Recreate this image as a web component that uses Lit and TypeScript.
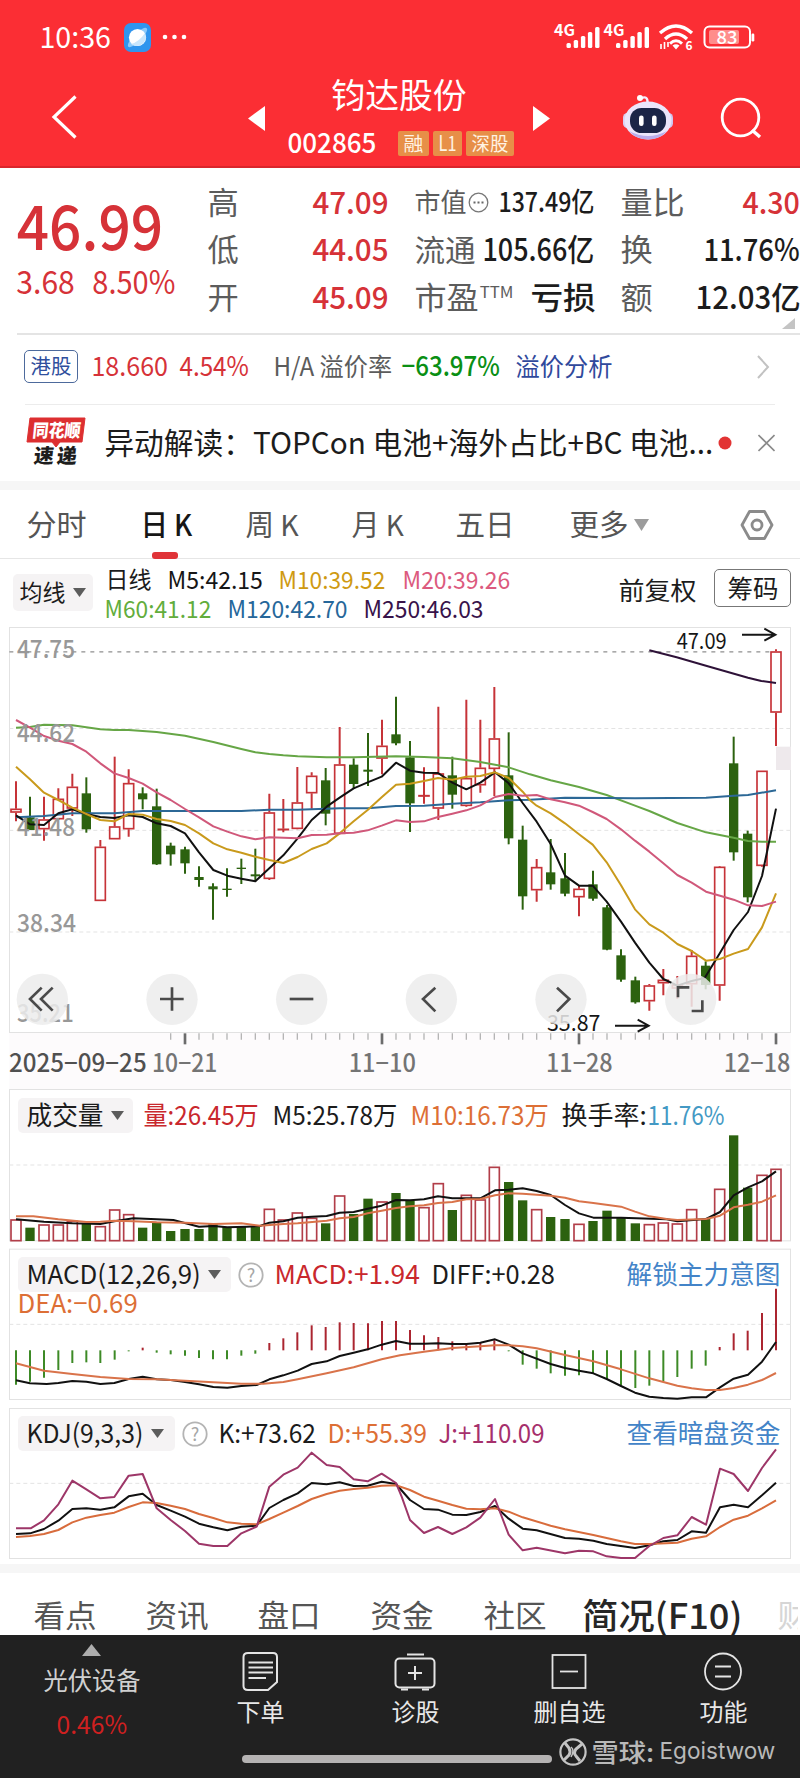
import { LitElement, html, svg, css } from "lit";
import { customElement, property, query } from "lit/decorators.js";

/** One line of text, condensed or widened so that it fills exactly `w` pixels. */
@customElement("fit-text")
class FitText extends LitElement {
  @property({ type: Number }) w = 0;
  @property({ type: Number }) gap = 0;
  @property({ type: Number }) size = 26;
  @query("span") private line!: HTMLSpanElement;

  static styles = css`
    :host {
      display: block;
      flex: none;
      line-height: 1;
      white-space: nowrap;
    }
    span {
      display: inline-block;
      vertical-align: top;
      transform-origin: 0 0;
    }
  `;

  updated() {
    this.style.width = `${this.w}px`;
    this.style.height = `${this.size}px`;
    this.style.marginLeft = `${this.gap}px`;
    this.style.fontSize = `${this.size}px`;
    const natural = this.line.offsetWidth || this.w;
    this.line.style.transform = `translate(-0.02em, -0.06em) scaleX(${(this.w + this.size * 0.04) / natural})`;
  }

  render() {
    return html`<span><slot></slot></span>`;
  }
}

/* Chart geometry is kept in thirds of a pixel. */
const X0 = 48;
const STEP = 42.22;
const cx = (i: number) => Math.round(X0 + i * STEP);

type Candle = [string, number, number, number, number];
const candles: Candle[] = [
  ["u", 484, 566, 578, 604], ["d", 530, 592, 630, 630], ["u", 530, 598, 628, 662], ["u", 505, 536, 598, 600],
  ["u", 461, 500, 566, 588], ["d", 472, 520, 628, 638], ["u", 660, 680, 843, 843], ["u", 410, 619, 658, 658],
  ["u", 448, 489, 628, 650], ["d", 502, 520, 538, 568], ["d", 506, 559, 733, 735], ["d", 668, 677, 703, 737],
  ["d", 680, 688, 730, 761], ["d", 739, 771, 780, 800], ["d", 790, 799, 808, 899], ["d", 745, 806, 810, 830],
  ["d", 716, 743, 747, 792], ["d", 686, 763, 769, 784], ["u", 521, 577, 777, 780], ["u", 537, 626, 628, 637],
  ["u", 441, 547, 627, 628], ["u", 457, 467, 520, 566], ["d", 444, 481, 581, 616], ["u", 321, 433, 642, 643],
  ["d", 415, 434, 492, 504], ["d", 339, 449, 455, 498], ["u", 299, 377, 416, 463], ["d", 230, 343, 370, 376],
  ["d", 363, 412, 550, 636], ["u", 442, 525, 527, 551], ["u", 260, 460, 566, 600], ["d", 410, 466, 524, 566],
  ["u", 239, 474, 558, 560], ["u", 299, 443, 496, 518], ["u", 201, 355, 447, 528], ["d", 337, 466, 655, 673],
  ["d", 617, 659, 829, 869], ["u", 717, 741, 811, 845], ["d", 657, 757, 793, 809], ["d", 699, 775, 821, 829],
  ["u", 796, 806, 832, 889], ["d", 752, 793, 836, 842], ["d", 855, 862, 989, 991], ["d", 988, 1006, 1079, 1085],
  ["d", 1070, 1081, 1147, 1151], ["u", 1092, 1096, 1144, 1172], ["u", 1047, 1079, 1090, 1126],
  ["u", 1068, 1094, 1106, 1136], ["u", 990, 1007, 1093, 1160], ["d", 1024, 1037, 1095, 1108],
  ["u", 738, 740, 1097, 1142], ["d", 350, 430, 697, 722], ["d", 632, 641, 832, 847], ["u", 452, 452, 738, 740],
  ["u", 88, 94, 278, 378],
];

const volumes = [
  418, 443, 433, 433, 422, 430, 438, 388, 402, 443, 428, 453, 447, 447, 432, 441, 440, 441, 386, 418, 397, 413, 430,
  346, 402, 356, 364, 339, 362, 381, 309, 390, 344, 358, 260, 306, 361, 387, 411, 417, 431, 423, 392, 413, 430, 432,
  427, 430, 387, 417, 326, 166, 323, 284, 266,
];

const macdEnds = [
  914, 905, 893, 870, 849, 847, 849, 839, 814, 803, 818, 823, 827, 834, 838, 838, 827, 821, 789, 775, 757, 736, 741,
  727, 729, 730, 723, 723, 750, 766, 771, 784, 790, 787, 781, 814, 854, 866, 880, 887, 886, 880, 897, 915, 924, 917,
  904, 891, 866, 857, 801, 760, 752, 699, 626,
];

const priceLines = [
  { c: "m250", p: "1948,91 2030,112 2118,137 2244,173 2284,183 2328,189" },
  { c: "m60", p: "48,323 90,321 132,314 217,316 259,322 301,328 343,330 386,330 470,336 555,347 640,366 724,387 766,397 808,402 850,406 893,409 980,412 1061,412 1188,409 1272,411 1357,415 1441,426 1526,442 1590,463 1652,481 1737,501 1820,525 1905,557 1948,573 2032,609 2118,637 2201,653 2244,663 2286,665 2328,665" },
  { c: "m120", p: "48,592 132,588 217,580 343,580 428,573 555,573 724,573 808,569 893,569 1019,565 1103,565 1188,558 1272,557 1357,551 1441,547 1526,541 1590,539 1695,533 1820,534 1905,535 2118,533 2201,527 2244,525 2328,511" },
  { c: "m5", p: "48,586 90,613 132,615 175,580 217,568 259,582 301,591 343,594 386,586 428,591 470,610 512,618 555,640 597,697 640,750 682,767 724,776 766,784 808,745 850,706 893,655 935,600 980,560 1019,533 1061,505 1103,487 1145,470 1188,428 1230,452 1272,458 1314,459 1357,488 1399,508 1441,488 1485,457 1526,490 1568,549 1610,605 1652,672 1695,767 1737,797 1778,797 1820,845 1863,905 1905,968 1948,1028 1990,1077 2032,1097 2075,1083 2114,1074 2158,1002 2201,930 2244,876 2286,768 2328,566" },
  { c: "m10", p: "48,440 90,478 132,518 175,540 217,563 259,582 301,600 343,604 386,582 428,584 470,597 512,603 555,615 597,640 640,670 682,688 724,698 766,710 808,720 850,729 893,711 935,687 980,670 1019,640 1061,604 1103,570 1145,532 1188,494 1230,491 1272,483 1314,474 1357,479 1399,470 1441,468 1485,457 1526,474 1568,515 1590,541 1610,557 1652,580 1695,610 1737,643 1778,674 1820,727 1863,796 1905,868 1948,913 1990,938 2032,972 2075,993 2118,1022 2160,1017 2201,1001 2244,987 2286,922 2328,820" },
  { c: "m20", p: "48,300 90,323 132,348 175,362 217,372 259,395 301,430 343,460 386,474 428,491 470,517 512,540 555,567 597,592 640,619 682,635 724,649 766,658 808,652 893,655 935,645 980,644 1019,640 1061,638 1103,631 1145,617 1188,601 1230,606 1272,604 1314,591 1357,581 1399,571 1441,556 1485,531 1526,522 1568,527 1610,525 1652,538 1695,547 1737,557 1778,576 1820,597 1863,628 1905,662 1948,695 1990,730 2032,765 2075,788 2118,815 2160,827 2201,839 2244,856 2286,858 2328,845" },
];

const volumeLines = [
  { c: "m5", p: "48,418 132,425 217,430 301,432 343,424 400,415 470,418 520,420 597,440 640,438 682,442 740,440 780,438 808,428 850,424 893,413 935,410 980,408 1019,398 1061,396 1103,386 1145,377 1188,360 1230,361 1272,358 1314,349 1357,355 1441,355 1485,331 1526,329 1568,325 1610,333 1652,345 1695,375 1737,400 1780,413 1863,413 2000,418 2032,424 2118,417 2160,396 2201,346 2244,322 2286,304 2328,274" },
  { c: "ora", p: "48,409 100,409 175,418 259,426 301,425 343,422 400,424 470,427 555,428 640,432 724,430 780,437 850,432 893,430 980,422 1019,415 1061,411 1103,400 1145,392 1188,384 1230,379 1272,376 1314,369 1357,366 1399,358 1441,357 1485,346 1526,340 1568,341 1652,347 1695,353 1737,364 1780,369 1863,380 1905,395 1948,409 2000,417 2032,420 2118,417 2160,407 2201,382 2244,374 2286,365 2328,346" },
];

const macdLines = [
  { c: "m5", p: "48,901 90,910 140,912 175,909 217,903 259,905 301,912 343,909 386,897 428,890 470,898 512,900 555,906 597,913 640,921 682,923 724,918 770,915 808,898 850,886 893,872 935,852 980,844 1019,828 1061,818 1103,808 1145,794 1188,783 1230,791 1272,791 1314,790 1357,792 1399,792 1441,788 1485,778 1526,794 1568,820 1652,852 1695,864 1737,872 1780,880 1820,897 1863,918 1905,938 1948,950 1990,954 2032,956 2075,952 2118,952 2160,922 2201,896 2244,884 2286,845 2328,786" },
  { c: "ora", p: "48,850 132,872 217,882 301,891 386,897 470,898 555,902 640,907 724,911 790,911 850,906 893,898 980,880 1061,862 1145,838 1200,826 1272,815 1357,804 1441,799 1485,796 1526,796 1568,799 1610,805 1695,825 1780,844 1863,868 1948,895 2032,917 2075,925 2118,930 2160,930 2201,924 2244,914 2286,900 2328,879" },
];

const kdjLines = [
  { c: "m5", p: "48,402 90,400 132,387 175,362 217,327 259,325 301,329 343,322 386,289 428,281 470,315 512,332 555,350 597,371 640,382 682,391 724,380 770,377 808,324 850,300 893,280 935,249 980,253 1019,247 1061,258 1103,257 1145,245 1188,252 1230,300 1272,327 1314,329 1357,344 1399,345 1441,336 1485,318 1526,356 1568,386 1610,391 1695,414 1737,416 1780,422 1820,432 1905,444 1948,436 1990,424 2032,420 2075,394 2118,398 2160,322 2201,314 2244,322 2286,286 2328,248" },
  { c: "kd", p: "48,411 90,408 132,402 175,390 217,367 259,353 301,345 343,338 386,321 428,307 470,309 512,317 555,327 597,342 640,354 682,367 724,371 770,373 808,357 850,338 893,318 935,297 980,282 1019,272 1061,267 1103,263 1145,257 1190,256 1230,270 1272,290 1314,302 1357,315 1399,326 1441,328 1485,325 1526,335 1568,352 1652,377 1695,388 1780,405 1863,424 1905,432 1948,432 2032,428 2075,416 2118,409 2160,381 2201,359 2244,347 2286,325 2328,301" },
  { c: "kj", p: "48,385 92,385 132,361 175,313 217,242 259,268 301,295 343,291 386,227 428,222 470,325 512,360 555,393 597,431 640,438 682,438 724,400 770,380 808,260 850,224 893,203 935,158 980,195 1019,201 1061,238 1103,244 1145,221 1188,249 1205,290 1230,360 1272,399 1314,381 1357,402 1399,382 1441,353 1485,297 1526,404 1568,451 1610,443 1695,460 1737,452 1780,454 1820,469 1863,474 1905,474 1948,438 1990,414 2032,406 2075,351 2118,374 2160,206 2201,222 2244,273 2286,204 2328,148" },
];

const lines = (set: { c: string; p: string }[]) =>
  set.map((l) => svg`<polyline class="ln ${l.c}" points=${l.p} />`);

const ctext = (x: number, y: number, w: number, text: string, cls: string) =>
  svg`<text class=${cls} x=${x} y=${y} textLength=${w} lengthAdjust="spacingAndGlyphs">${text}</text>`;

const candle = ([kind, high, top, bottom, low]: Candle, i: number) => {
  const x = cx(i);
  const h = Math.max(bottom - top, 4);
  return kind === "u"
    ? svg`<path class="wick up" d="M${x} ${high}V${top}M${x} ${bottom}V${low}" />
        <rect class="up" x=${x - 15} y=${top + 2} width="30" height=${Math.max(h - 4, 1)} />`
    : svg`<path class="wick down" d="M${x} ${high}V${low}" /><rect class="down" x=${x - 14} y=${top} width="28" height=${h} />`;
};

const roundGlyphs = [
  "M125 1103L90 1137L125 1172M158 1103L123 1137L158 1172",
  "M480 1137H551M516 1102V1172",
  "M869 1137H940",
  "M1306 1103L1269 1137L1306 1174",
  "M1671 1103L1708 1137L1671 1174",
  "M2034 1132V1102H2068M2107 1141V1173H2075",
];

@customElement("app-root")
class AppRoot extends LitElement {
  static styles = css`
    :host {
      display: block;
      width: 800px;
      height: 1778px;
      overflow: hidden;
      background: #fff;
      color: #1c1c1c;
      font-family: "Noto Sans CJK SC", sans-serif;
    }
    * { box-sizing: border-box; }
    svg { display: block; flex: none; }
    .row { display: flex; align-items: center; }
    .red { color: #d63238; }
    .white { color: #fff; }
    .b { font-weight: 500; }
    .gray { color: #5c5c5c; }

    header { height: 168px; background: #fb2e34; border-bottom: 2px solid #d9262c; }
    .status { height: 74px; color: #fff; }
    .app-icon { margin-left: 14px; }
    .dots { margin-left: 11px; }
    .signals { margin-left: 366px; overflow: visible; }
    .nav { height: 90px; align-items: flex-start; }
    .nav-back { margin: 20px 0 0 50px; }
    .nav-prev { margin: 32px 0 0 170px; }
    .nav-title { width: 236px; margin: 5px 0 0 23px; }
    .nav-code { height: 26px; margin-top: 17px; }
    .nav-next { margin: 32px 0 0 9px; }
    .bot { margin: 20px 0 0 72px; }
    .search { margin: 23px 0 0 45px; }
    .tag { display: flex; align-items: center; height: 25px; padding: 0 6px; margin-left: 4px; border-radius: 2px; background: #e78f48; color: #fff3e4; }
    .tag.first { margin-left: 22px; }

    .quote { display: flex; height: 165px; padding-top: 11px; }
    .price { width: 192px; padding-left: 17px; }
    .price .big { height: 86px; padding-top: 17px; }
    .price .chg { height: 34px; }
    .cols .row { height: 47px; }
    .cols .row:last-child { height: 49px; }
    .dots-ico { margin-left: 2px; }
    .sup { align-self: flex-start; margin-top: 11px; }
    .corner { margin: -18px 0 0 782px; height: 18px; padding-top: 3px; }

    .hk { height: 71px; margin: 0 0 0 17px; border-top: 2px solid #e4e4e4; padding-bottom: 6px; }
    .hk-tag { display: flex; align-items: center; justify-content: center; margin-left: 7px; width: 54px; height: 33px; border: 1px solid #4d6a9c; border-radius: 5px; color: #2f4f9d; }
    .blue { color: #30499c; }
    .green { color: #0a8f14; }
    .chev { margin-left: 144px; }
    .news { height: 77px; margin-left: 25px; width: 750px; border-top: 1px solid #ececec; }
    .logo { margin-left: 1px; }
    .dot { margin-left: 5px; }
    .x { margin-left: 26px; }
    .band { height: 9px; background: #f6f6f6; }

    .periods { height: 69px; border-bottom: 1px solid #e6e6e6; position: relative; padding: 2px 0 0 27px; color: #555; }
    .underline { position: absolute; left: 152px; top: 62px; width: 26px; height: 7px; border-radius: 3px; background: #e03338; }
    .ink { color: #161616; }
    .more { margin-left: 6px; }
    .gear { margin-left: 91px; }

    .ma { height: 68px; align-items: flex-start; }
    .picker { display: flex; align-items: center; border-radius: 5px; background: #f5f3f4; }
    .picker.avg { width: 80px; height: 37px; margin: 15px 0 0 13px; padding-left: 7px; }
    .picker.avg svg { margin-left: 8px; }
    .ma-values { width: 512px; padding-top: 6px; }
    .ma-values .row { height: 29px; padding-left: 12px; }
    .adj { width: 91px; padding: 19px 0 0 14px; }
    .chips { display: flex; align-items: center; width: 77px; height: 38px; margin: 10px 0 0 18px; padding-left: 13px; border: 1px solid #777; border-radius: 5px; }
    .t5 { color: #161616; } .t10 { color: #cf9a12; } .t20 { color: #dc5a7e; } .t60 { color: #62ad3c; }
    .t120 { color: #26679a; } .t250 { color: #38124a; } .tora { color: #dd6f36; } .tj { color: #a6306c; }
    .cyan { color: #4399c4; } .link { color: #4384c8; } .vred { color: #c9282d; }

    .panel { display: grid; }
    .panel > * { grid-area: 1 / 1; }
    .head { padding-left: 18px; z-index: 1; }
    .head .picker { height: 35px; padding-left: 9px; }
    .picker svg { margin-left: 8px; }
    .picker.vol { width: 115px; }
    .picker.macd { width: 213px; }
    .picker.kdj { width: 157px; }
    .head.volh { padding-top: 9px; }
    .head.macdh { padding-top: 12px; }
    .head.kdjh { padding-top: 12px; }
    .sub { height: 24px; }
    .help { margin-left: 7px; }

    .frame { fill: none; stroke: #e2e2e2; stroke-width: 3; }
    .grid { stroke: #e3e3e3; stroke-width: 3; stroke-dasharray: 12 9; fill: none; }
    .grid.top { stroke: #8f8f8f; stroke-width: 4; stroke-dasharray: 12 15; }
    .axis-bg { fill: #fdfbfc; }
    .side { fill: #eee9ec; }
    .up { fill: #fff; stroke: #c63338; stroke-width: 5; }
    .down { fill: #2c620f; }
    .wick { fill: none; stroke-width: 6; }
    .wick.up { stroke-width: 6; }
    .wick.down { stroke: #2c620f; }
    .vup { fill: #fff; stroke: #b23e49; stroke-width: 5; }
    .ln { fill: none; stroke-width: 6; stroke-linejoin: round; }
    .m5 { stroke: #111; } .m10 { stroke: #c99a1c; } .m20 { stroke: #d0587a; } .m60 { stroke: #66a646; }
    .m120 { stroke: #2c6896; } .m250 { stroke: #2e1238; } .ora { stroke: #d9734a; } .kd { stroke: #d86c3c; } .kj { stroke: #9d3668; }
    .mr { stroke: #ab2530; stroke-width: 6; } .mg { stroke: #3d8a26; stroke-width: 6; }
    .pl { font-size: 75px; font-weight: 500; fill: #989898; }
    .dl { font-size: 75px; font-weight: 500; fill: #747474; }
    .dl.first { fill: #505050; }
    .ex { font-size: 66px; fill: #161616; }
    .tick { stroke: #b5b5b5; stroke-width: 4; }
    .tick.major { stroke: #6c6c6c; stroke-width: 8; }
    .arrow { fill: none; stroke: #161616; stroke-width: 6; }
    .round { fill: #ececec; fill-opacity: 0.85; }
    .glyph { fill: none; stroke: #4a4a4a; stroke-width: 8; }

    .tabs { height: 62px; padding: 27px 0 0 34px; align-items: flex-start; color: #555; overflow: hidden; }
    .strong { margin-top: -2px; color: #262626; }
    .faint { color: #d6d6d6; width: 56px; flex: none; overflow: hidden; }

    footer { height: 144px; background: #212121; color: #e8e8e8; }
    .actions { height: 102px; align-items: flex-start; }
    .act { display: flex; flex-direction: column; align-items: center; padding-top: 16px; }
    .act.sector { width: 183px; padding-top: 9px; }
    .sector .name { margin-top: 12px; color: #d0d0d0; }
    .sector .pct { margin-top: 19px; color: #cf2020; }
    .cap { margin-top: 8px; }
    .order { width: 155px; }
    .diag, .del, .fn { width: 154px; }
    .bottom { height: 30px; padding-left: 242px; }
    .home { width: 310px; height: 8px; border-radius: 4px; background: #b5b3b3; margin-top: 14px; }
    .mark { color: #b9b9b9; }
    .latin { font-family: Inter, "Open Sans", sans-serif; }
    .wm { margin-left: 7px; }
  `;

  private header() {
    return html`<header>
      <div class="status row">
        <fit-text w="70" gap="40" size="29">10:36</fit-text>
        <svg class="app-icon" width="27" height="29" viewBox="0 0 27 29">
          <rect width="27" height="29" rx="7" fill="#2f95ee" />
          <ellipse cx="13.5" cy="14.5" rx="13" ry="4" transform="rotate(-45 13.5 14.5)" fill="#8ccafa" />
          <circle cx="13.5" cy="14.5" r="8.6" fill="#fff" />
          <path d="M7 21Q15 19 21 10L22 15Q19 24 11 23Z" fill="#c9e6fc" />
        </svg>
        <svg class="dots" width="26" height="8" viewBox="0 0 26 8" fill="#fff">
          <circle cx="3" cy="4" r="2.3" /><circle cx="12.5" cy="4" r="2.3" /><circle cx="22" cy="4" r="2.3" />
        </svg>
        <svg class="signals" width="202" height="28" viewBox="553 23 202 28">
          ${[0, 49.5].map(
            (d) => svg`<g transform="translate(${d} 0)" fill="#fff">
              <text x="553" y="36" font-size="16" font-weight="700" textLength="21" lengthAdjust="spacingAndGlyphs">4G</text>
              <rect x="565.5" y="43" width="4.4" height="5" rx="1.5" /><rect x="572.7" y="40" width="4.4" height="8" rx="1.5" />
              <rect x="579.9" y="36" width="4.4" height="12" rx="1.5" /><rect x="586.9" y="32" width="4.4" height="16" rx="1.5" />
              <rect x="594.1" y="27" width="4.4" height="21" rx="1.5" /></g>`
          )}
          <g fill="none" stroke="#fff" stroke-width="3.4">
            <path d="M659 33Q675 19 691 33" /><path d="M664 39Q675 29 686 39" /><path d="M669 43.6Q675 38 681 43.6" stroke-width="3" />
            <path d="M660 44V49M663.5 42V49M667 42V47" stroke-width="1.6" />
          </g>
          <path d="M671.5 45.5Q675 43 678.5 45.5L675 49.5Z" fill="#fff" />
          <text x="684.5" y="50" font-size="12" font-weight="700" fill="#fff">6</text>
          <rect x="703.5" y="26.5" width="45.5" height="21" rx="5" fill="none" stroke="#fff" stroke-width="2" />
          <rect x="708" y="30" width="30" height="14" rx="2" fill="#ff8d8b" />
          <rect x="750.5" y="33.5" width="2.8" height="8" rx="1.2" fill="#fff" />
          <text x="715.5" y="43.5" font-size="18" font-weight="500" fill="#fff" textLength="21" lengthAdjust="spacingAndGlyphs">83</text>
        </svg>
      </div>
      <div class="nav row">
        <svg class="nav-back" width="28" height="46" viewBox="0 0 28 46"><path d="M25.5 2.5L4 23L25.5 43.5" fill="none" stroke="#fff" stroke-width="3.2" /></svg>
        <svg class="nav-prev" width="17" height="25" viewBox="0 0 17 25"><path d="M17 0V25L0 12.5Z" fill="#fff" /></svg>
        <div class="nav-title">
          <fit-text class="white" w="134" gap="44" size="34">钧达股份</fit-text>
          <div class="nav-code row">
            <fit-text class="white b" w="88" size="28">002865</fit-text>
            <span class="tag first"><fit-text w="19" size="19">融</fit-text></span>
            <span class="tag"><fit-text w="17" size="21">L1</fit-text></span>
            <span class="tag"><fit-text w="36" size="19">深股</fit-text></span>
          </div>
        </div>
        <svg class="nav-next" width="17" height="25" viewBox="0 0 17 25"><path d="M0 0V25L17 12.5Z" fill="#fff" /></svg>
        <svg class="bot" width="52" height="48" viewBox="0 0 52 48">
          <path d="M19 4.5Q26 1 25.5 9" fill="none" stroke="#f4eeff" stroke-width="2.4" /><circle cx="18" cy="4" r="3" fill="#fff" />
          <rect x="1" y="19" width="10" height="15" rx="4.5" fill="#d9d0f4" /><rect x="41" y="19" width="10" height="15" rx="4.5" fill="#cfc5f0" />
          <ellipse cx="26" cy="26.5" rx="23.5" ry="19" fill="#ebe5fb" /><path d="M7 37Q26 47 45 37Q38 45.5 26 45.5Q14 45.5 7 37Z" fill="#b9adeb" />
          <rect x="8" y="14" width="36" height="25" rx="11.5" fill="#1b2547" /><rect x="17" y="21.5" width="4.6" height="10.5" rx="2.2" fill="#fff" /><rect x="30" y="21.5" width="4.6" height="10.5" rx="2.2" fill="#fff" />
        </svg>
        <svg class="search" width="44" height="44" viewBox="0 0 44 44" fill="none" stroke="#fff" stroke-width="2.8"><circle cx="21.5" cy="20.5" r="18.3" /><path d="M33 33L41 40" stroke-width="3.4" /></svg>
      </div>
    </header>`;
  }

  private quote() {
    return html`<section class="quote">
        <div class="price">
          <div class="big"><fit-text class="red b" w="144" gap="1" size="62">46.99</fit-text></div>
          <div class="chg row"><fit-text class="red" w="57" size="32">3.68</fit-text><fit-text class="red" w="82" gap="19" size="32">8.50%</fit-text></div>
        </div>
        <div class="cols">
          <div class="row">
            <fit-text class="gray" w="30" gap="16" size="31">高</fit-text><fit-text class="red b" w="75" gap="75" size="31">47.09</fit-text>
            <fit-text class="gray" w="51" gap="27" size="26">市值</fit-text>
            <svg class="dots-ico" width="21" height="21" viewBox="0 0 21 21"><circle cx="10.5" cy="10.5" r="9.3" fill="none" stroke="#777" stroke-width="1.3" /><path d="M5.5 10.5h2M9.5 10.5h2M13.5 10.5h2" stroke="#666" stroke-width="1.8" /></svg>
            <fit-text class="b" w="95" gap="10" size="27">137.49亿</fit-text>
            <fit-text class="gray" w="63" gap="27" size="31">量比</fit-text><fit-text class="red b" w="56" gap="59" size="31">4.30</fit-text>
          </div>
          <div class="row">
            <fit-text class="gray" w="30" gap="16" size="31">低</fit-text><fit-text class="red b" w="75" gap="75" size="31">44.05</fit-text>
            <fit-text class="gray" w="60" gap="27" size="30">流通</fit-text><fit-text class="b" w="111" gap="8" size="31">105.66亿</fit-text>
            <fit-text class="gray" w="31" gap="27" size="31">换</fit-text><fit-text class="b" w="95" gap="52" size="31">11.76%</fit-text>
          </div>
          <div class="row">
            <fit-text class="gray" w="30" gap="16" size="31">开</fit-text><fit-text class="red b" w="75" gap="75" size="31">45.09</fit-text>
            <fit-text class="gray" w="63" gap="27" size="31">市盈</fit-text><fit-text class="gray sup" w="33" gap="2" size="16">TTM</fit-text><fit-text class="b" w="64" gap="18" size="31">亏损</fit-text>
            <fit-text class="gray" w="31" gap="26" size="31">额</fit-text><fit-text class="b" w="104" gap="44" size="31">12.03亿</fit-text>
          </div>
        </div>
      </section>
      <div class="corner"><svg width="13" height="11" viewBox="0 0 13 11"><path d="M13 0V11H0Z" fill="#c4c4c4" /></svg></div>
      <section class="hk row">
        <span class="hk-tag"><fit-text w="40" size="20">港股</fit-text></span>
        <fit-text class="red" w="75" gap="14" size="27">18.660</fit-text>
        <fit-text class="red" w="68" gap="13" size="27">4.54%</fit-text>
        <fit-text class="gray" w="118" gap="26" size="25">H/A 溢价率</fit-text>
        <fit-text class="green b" w="97" gap="10" size="27">−63.97%</fit-text>
        <fit-text class="blue" w="96" gap="17" size="25">溢价分析</fit-text>
        <svg class="chev" width="14" height="26" viewBox="0 0 14 26"><path d="M2 2L12 13L2 24" fill="none" stroke="#c2c2c2" stroke-width="2" /></svg>
      </section>
      <section class="news row">
        <svg class="logo" width="60" height="52" viewBox="0 0 60 52">
          <path d="M4 1H59L56 25H34L30 30L26 25H1Z" fill="#dd2f30" stroke="#dd2f30" stroke-width="1" stroke-linejoin="round" />
          <text x="6" y="20" font-size="18" font-weight="900" fill="#fff" textLength="48" lengthAdjust="spacingAndGlyphs" transform="skewX(-6) translate(2 0)">同花顺</text>
          <text x="10" y="46" font-size="20" font-weight="900" fill="#1d1d1d" textLength="43" transform="skewX(-6) translate(2 0)">速递</text>
        </svg>
        <fit-text w="608" gap="19" size="30">异动解读：TOPCon 电池+海外占比+BC 电池...</fit-text>
        <svg class="dot" width="14" height="14" viewBox="0 0 14 14"><circle cx="7" cy="7" r="6.5" fill="#e23434" /></svg>
        <svg class="x" width="17" height="18" viewBox="-4.5 0 17 18"><path d="M-4 1L12 17M12 1L-4 17" stroke="#8a8a8a" stroke-width="1.6" /></svg>
      </section>
      <div class="band"></div>`;
  }

  private caret(color = "#5c5c5c", w = 13, h = 9) {
    return html`<svg width=${w} height=${h} viewBox="0 0 12 9" preserveAspectRatio="none"><path d="M0 0H12L6 9Z" fill=${color} /></svg>`;
  }

  private help() {
    return html`<svg class="help" width="26" height="26" viewBox="0 0 26 26"><circle cx="13" cy="13" r="11.7" fill="none" stroke="#b4b4b4" stroke-width="1.8" /><text x="13" y="19.5" text-anchor="middle" font-size="18" fill="#a6a6a6">?</text></svg>`;
  }

  private periods() {
    return html`<nav class="periods row">
        <fit-text w="59" size="29">分时</fit-text>
        <fit-text class="ink b" w="51" gap="55" size="29">日 K</fit-text>
        <fit-text w="52" gap="54" size="29">周 K</fit-text>
        <fit-text w="51" gap="54" size="29">月 K</fit-text>
        <fit-text w="58" gap="53" size="29">五日</fit-text>
        <fit-text w="58" gap="56" size="29">更多</fit-text>
        <span class="more">${this.caret("#9c9c9c", 15, 12)}</span>
        <svg class="gear" width="34" height="32" viewBox="0 0 34 32" fill="none" stroke="#8b8b8b" stroke-width="2.8"><path d="M9.5 2.5H24.5L32 16L24.5 29.5H9.5L2 16Z" stroke-linejoin="round" /><circle cx="17" cy="16" r="5" /></svg>
        <span class="underline"></span>
      </nav>
      <section class="ma row">
        <span class="picker avg"><fit-text w="45" size="23">均线</fit-text>${this.caret()}</span>
        <div class="ma-values">
          <div class="row">
            <fit-text w="45" gap="1" size="23">日线</fit-text><fit-text class="t5" w="94" gap="17" size="24">M5:42.15</fit-text>
            <fit-text class="t10" w="106" gap="17" size="24">M10:39.52</fit-text><fit-text class="t20" w="107" gap="18" size="24">M20:39.26</fit-text>
          </div>
          <div class="row">
            <fit-text class="t60" w="106" size="24">M60:41.12</fit-text><fit-text class="t120" w="119" gap="17" size="24">M120:42.70</fit-text>
            <fit-text class="t250" w="119" gap="17" size="24">M250:46.03</fit-text>
          </div>
        </div>
        <div class="adj"><fit-text w="77" size="25">前复权</fit-text></div>
        <div class="chips"><fit-text w="50" size="25">筹码</fit-text></div>
      </section>`;
  }

  private priceChart() {
    const majors = [12, 26, 40, 54];
    return html`<section class="panel">
      <svg width="800" height="462" viewBox="0 21 2400 1386">
        <rect class="axis-bg" x="28" y="1238" width="2344" height="170" />
        <rect class="frame" x="28.5" y="22.5" width="2343" height="1215" />
        <path class="grid top" d="M28 95.5H2315" />
        <path class="grid" d="M28 325.5H2371M28 631H2371M28 936H2371" />
        <rect class="side" x="2328" y="380" width="45" height="70" />
        ${candles.map(candle)} ${lines(priceLines)}
        ${ctext(51, 113, 174, "47.75", "pl")} ${ctext(51, 365, 174, "44.62", "pl")} ${ctext(51, 648, 174, "41.48", "pl")}
        ${ctext(51, 936, 177, "38.34", "pl")} ${ctext(51, 1205, 170, "35.21", "pl")}
        ${ctext(2030, 86, 150, "47.09", "ex")} ${ctext(1641, 1232, 160, "35.87", "ex")}
        <path class="arrow" d="M2226 44H2326M2293 26L2326 44L2293 62M1845 1217H1946M1913 1199L1946 1217L1913 1235" />
        ${roundGlyphs.map((d, i) => svg`<circle class="round" cx=${127 + i * 389} cy="1138" r="77" /><path class="glyph" d=${d} />`)}
        ${candles.map((_, i) =>
          i < 11 ? "" : svg`<path class="tick ${majors.includes(i) ? "major" : ""}" d="M${cx(i)} 1240V${majors.includes(i) ? 1273 : 1259}" />`
        )}
        ${ctext(27, 1357, 413, "2025−09−25", "dl first")} ${ctext(456, 1357, 196, "10−21", "dl")}
        ${ctext(1046, 1357, 202, "11−10", "dl")} ${ctext(1638, 1357, 200, "11−28", "dl")} ${ctext(2171, 1357, 200, "12−18", "dl")}
      </svg>
    </section>`;
  }

  private volume() {
    return html`<section class="panel">
      <svg width="800" height="156" viewBox="0 27 2400 468">
        <rect class="frame" x="28.5" y="28.5" width="2343" height="454" />
        <path class="grid" d="M28 255H2371" />
        ${volumes.map((y, i) =>
          candles[i][0] === "u"
            ? svg`<rect class="vup" x=${cx(i) - 15} y=${y + 2} width="30" height=${480 - y} />`
            : svg`<rect class="down" x=${cx(i) - 14} y=${y} width="28" height=${483 - y} />`
        )}
        ${lines(volumeLines)}
      </svg>
      <div class="head volh"><div class="row">
        <span class="picker vol"><fit-text w="76" size="26">成交量</fit-text>${this.caret()}</span>
        <fit-text class="vred" w="114" gap="11" size="26">量:26.45万</fit-text><fit-text w="124" gap="15" size="26">M5:25.78万</fit-text>
        <fit-text class="tora" w="137" gap="14" size="26">M10:16.73万</fit-text><fit-text w="84" gap="14" size="26">换手率:</fit-text>
        <fit-text class="cyan" w="76" gap="2" size="26">11.76%</fit-text>
      </div></div>
    </section>`;
  }

  private macd() {
    return html`<section class="panel">
      <svg width="800" height="159" viewBox="0 495 2400 477">
        <rect class="frame" x="28.5" y="507.5" width="2343" height="451" />
        <path class="grid" d="M28 733H2371" />
        ${macdEnds.map((y, i) => svg`<path class=${y < 811 ? "mr" : "mg"} d="M${cx(i)} 811V${y}" />`)} ${lines(macdLines)}
      </svg>
      <div class="head macdh">
        <div class="row">
          <span class="picker macd"><fit-text w="173" size="26">MACD(12,26,9)</fit-text>${this.caret()}</span>${this.help()}
          <fit-text class="vred" w="144" gap="11" size="26">MACD:+1.94</fit-text><fit-text w="122" gap="13" size="26">DIFF:+0.28</fit-text>
          <fit-text class="link" w="153" gap="73" size="26">解锁主力意图</fit-text>
        </div>
        <div class="sub row"><fit-text class="tora" w="119" size="26">DEA:−0.69</fit-text></div>
      </div>
    </section>`;
  }

  private kdj() {
    return html`<section class="panel">
      <svg width="800" height="160" viewBox="0 12 2400 480">
        <rect class="frame" x="28.5" y="25.5" width="2343" height="450" />
        <path class="grid" d="M28 250H2371" />
        ${lines(kdjLines)}
      </svg>
      <div class="head kdjh"><div class="row">
        <span class="picker kdj"><fit-text w="116" size="26">KDJ(9,3,3)</fit-text>${this.caret()}</span>${this.help()}
        <fit-text w="96" gap="11" size="26">K:+73.62</fit-text><fit-text class="tora" w="99" gap="13" size="26">D:+55.39</fit-text>
        <fit-text class="tj" w="105" gap="12" size="26">J:+110.09</fit-text><fit-text class="link" w="153" gap="83" size="26">查看暗盘资金</fit-text>
      </div></div>
    </section>`;
  }

  private footer() {
    return html`<div class="band"></div>
      <nav class="tabs row">
        <fit-text w="62" size="31">看点</fit-text><fit-text w="62" gap="50" size="31">资讯</fit-text><fit-text w="62" gap="50" size="31">盘口</fit-text>
        <fit-text w="62" gap="51" size="31">资金</fit-text><fit-text w="62" gap="51" size="31">社区</fit-text>
        <fit-text class="strong b" w="159" gap="37" size="35">简况(F10)</fit-text>
        <div class="faint"><fit-text w="31" gap="36" size="31">财</fit-text></div>
      </nav>
      <footer>
        <div class="actions row">
          <div class="act sector">
            <svg width="19" height="12" viewBox="0 0 19 12"><path d="M9.5 0L19 12H0Z" fill="#adadad" /></svg>
            <fit-text class="name" w="96" size="25">光伏设备</fit-text><fit-text class="pct" w="70" size="25">0.46%</fit-text>
          </div>
          <div class="act order">
            <svg width="37" height="41" viewBox="0 0 37 41" fill="none" stroke="#e4e4e4" stroke-width="2"><path d="M6 2H31Q35 2 35 6V31L26 39H6Q1.5 39 1.5 35V6Q1.5 2 6 2Z" /><path d="M6.5 11.5H31M6.5 16.5H31M6.5 21.5H31M6.5 27H24" stroke-width="1.8" /></svg>
            <fit-text class="cap" w="47" size="24">下单</fit-text>
          </div>
          <div class="act diag">
            <svg width="43" height="41" viewBox="0 0 43 41" fill="none" stroke="#e4e4e4" stroke-width="2"><rect x="1.5" y="7.5" width="39" height="29" rx="4" /><path d="M13 3.5H30M7 38.5H14M28 38.5H35M21 15V29M14 22H28" /></svg>
            <fit-text class="cap" w="47" size="24">诊股</fit-text>
          </div>
          <div class="act del">
            <svg width="36" height="41" viewBox="0 0 36 41" fill="none" stroke="#e4e4e4" stroke-width="1.8"><rect x="1.5" y="4" width="33" height="33" /><path d="M9 20.5H27" /></svg>
            <fit-text class="cap" w="71" size="24">删自选</fit-text>
          </div>
          <div class="act fn">
            <svg width="40" height="41" viewBox="0 0 40 41" fill="none" stroke="#e4e4e4" stroke-width="1.8"><circle cx="20" cy="20.5" r="18" /><path d="M12 15.5H28M12 25.5H28" /></svg>
            <fit-text class="cap" w="47" size="24">功能</fit-text>
          </div>
        </div>
        <div class="bottom row">
          <span class="home"></span>
          <svg class="wm" width="28" height="28" viewBox="0 0 28 28" fill="none" stroke="#c4c4c4" stroke-width="2.2"><circle cx="14" cy="14" r="12.6" /><path d="M6 5L10 10Q12 14 10 17L5 22" stroke-width="3" /><path d="M23 6L17 11Q14 15 17 18L21 23" stroke-width="3" /><path d="M12 9Q16 12 12 19" stroke-width="1.5" /></svg>
          <fit-text class="mark b" w="61" gap="5" size="25">雪球:</fit-text><fit-text class="mark latin" w="115" gap="7" size="23">Egoistwow</fit-text>
        </div>
      </footer>`;
  }

  render() {
    return html`${this.header()}${this.quote()}${this.periods()}${this.priceChart()}${this.volume()}${this.macd()}${this.kdj()}${this.footer()}`;
  }
}
